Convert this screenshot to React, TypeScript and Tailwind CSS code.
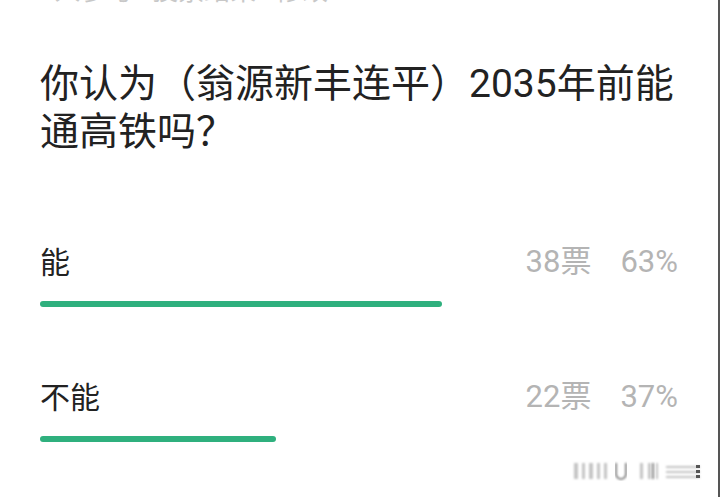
import React from 'react';

const options = [
    { label: '能', votes: 38, pct: 63 },
    { label: '不能', votes: 22, pct: 37 },
];

// blurred watermark in the bottom-right corner
const Watermark = () => (
    <svg viewBox="0 0 140 30" className="absolute right-[6px] bottom-[10px] w-[140px] h-[30px]">
        <defs>
            <filter id="wm-blur">
                <feGaussianBlur stdDeviation="1.2" />
            </filter>
        </defs>
        <g filter="url(#wm-blur)" fill="#c4c4c4">
            <rect x="2" y="6" width="4" height="16" />
            <rect x="10" y="6" width="3" height="16" />
            <rect x="17" y="6" width="4" height="16" />
            <rect x="25" y="6" width="3" height="16" />
            <rect x="32" y="6" width="3" height="16" />
            <rect x="68" y="6" width="3" height="16" />
            <rect x="76" y="6" width="3" height="16" />
            <rect x="84" y="6" width="2" height="16" />
            <rect x="94" y="9" width="34" height="2" />
            <rect x="94" y="14" width="34" height="2" />
            <rect x="94" y="19" width="34" height="2" />
        </g>
        <path d="M44 6 v11 a5 5 0 0 0 10 0 v-11" fill="none" stroke="#666" strokeWidth="1.6" filter="url(#wm-blur)" />
        <rect x="80" y="6" width="2" height="16" fill="#888" filter="url(#wm-blur)" />
        <rect x="124" y="8" width="4" height="3" fill="#555" />
        <rect x="124" y="13" width="4" height="3" fill="#555" />
        <rect x="124" y="18" width="4" height="3" fill="#555" />
    </svg>
);

export default function App() {
    return (
        <div
            className="relative w-[720px] h-[497px] overflow-hidden bg-white border-r-2 border-[#555]"
            style={{ fontFamily: "Roboto, 'Noto Sans CJK SC', sans-serif" }}
        >
            <div className="px-[40px]">
                <div className="-mt-[24px] h-[30px] text-[26px] leading-[30px] text-[#c8c8c8] whitespace-nowrap">
                    9人参与 · 投票结束 · 修改
                </div>

                <h1 className="mt-[54px] text-[39px] leading-[48px] text-[#222] font-normal">
                    你认为（翁源新丰连平）2035年前能通高铁吗？
                </h1>

                <div className="mt-[86px] flex flex-col gap-[70px]">
                    {options.map((o) => (
                        <div key={o.label}>
                            <div className="flex items-center justify-between h-[40px]">
                                <span className="text-[30px] text-[#222]">{o.label}</span>
                                <span className="flex gap-[29px] text-[31px] text-[#b4b4b4]">
                                    <span>{o.votes}票</span>
                                    <span>{o.pct}%</span>
                                </span>
                            </div>
                            <div className="mt-[19px] h-[6px]">
                                <div
                                    className="h-full rounded-full bg-[#2fb07e]"
                                    style={{ width: `${o.pct}%` }}
                                />
                            </div>
                        </div>
                    ))}
                </div>
            </div>
            <Watermark />
        </div>
    );
}
